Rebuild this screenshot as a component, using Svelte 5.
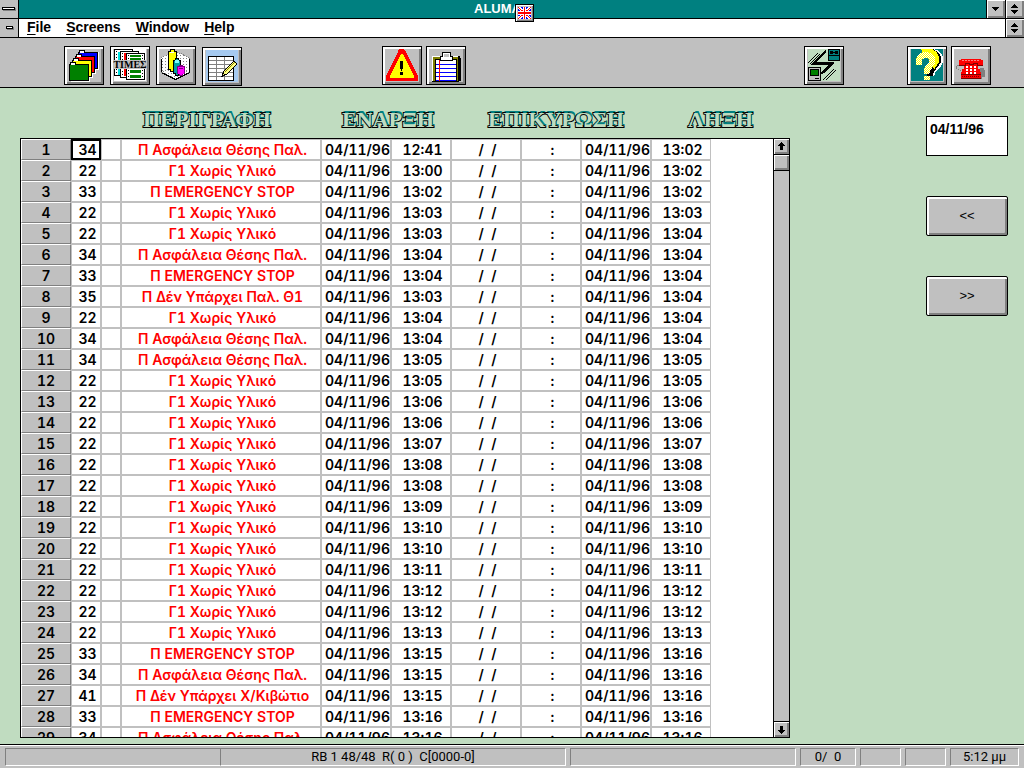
<script lang="ts">
	type Row = [code: number, start: string, end: string];

	const DATE = '04/11/96';

	const descriptions: Record<number, string> = {
		22: 'Γ1 Χωρίς Υλικό',
		33: 'Π EMERGENCY STOP',
		34: 'Π Ασφάλεια Θέσης Παλ.',
		35: 'Π Δέν Υπάρχει Παλ. Θ1',
		41: 'Π Δέν Υπάρχει Χ/Κιβώτιο'
	};

	const rows: Row[] = [
		[34, '12:41', '13:02'],
		[22, '13:00', '13:02'],
		[33, '13:02', '13:02'],
		[22, '13:03', '13:03'],
		[22, '13:03', '13:04'],
		[34, '13:04', '13:04'],
		[33, '13:04', '13:04'],
		[35, '13:03', '13:04'],
		[22, '13:04', '13:04'],
		[34, '13:04', '13:04'],
		[34, '13:05', '13:05'],
		[22, '13:05', '13:05'],
		[22, '13:06', '13:06'],
		[22, '13:06', '13:06'],
		[22, '13:07', '13:07'],
		[22, '13:08', '13:08'],
		[22, '13:08', '13:08'],
		[22, '13:09', '13:09'],
		[22, '13:10', '13:10'],
		[22, '13:10', '13:10'],
		[22, '13:11', '13:11'],
		[22, '13:12', '13:12'],
		[22, '13:12', '13:12'],
		[22, '13:13', '13:13'],
		[33, '13:15', '13:16'],
		[34, '13:15', '13:16'],
		[41, '13:15', '13:16'],
		[33, '13:16', '13:16'],
		[34, '13:16', '13:16']
	];

	const menus = ['File', 'Screens', 'Window', 'Help'];
	const headings = ['ΠΕΡΙΓΡΑΦΗ', 'ΕΝΑΡΞΗ', 'ΕΠΙΚΥΡΩΣΗ', 'ΛΗΞΗ'];

	const folders = [
		{ x: 14, y: 6, color: '#0000ff' },
		{ x: 11, y: 10, color: '#ff0000' },
		{ x: 8, y: 14, color: '#ffff00' },
		{ x: 5, y: 18, color: '#008000' }
	];

	let date = $state(DATE);
	let selected = $state(0);
</script>

<div class="window">
	<header class="titlebar">
		<button class="system" aria-label="Control menu">
			<svg width="18" height="18" shape-rendering="crispEdges">
				<path d="M3 10h13v1h-13zM15 8h1v3h-1z" fill="#808080" />
				<rect x="2" y="7" width="13" height="3" />
				<rect x="3" y="8" width="11" height="1" fill="#fff" />
			</svg>
		</button>
		<h1>ALUMA</h1>
		<button class="frame" aria-label="Minimize">
			<svg width="18" height="18" shape-rendering="crispEdges">
				<path d="M5 7h7v1h-1v1h-1v1h-1v1h-1v-1h-1v-1h-1v-1h-1z" />
			</svg>
		</button>
		<button class="frame" aria-label="Restore">
			<svg width="18" height="18" shape-rendering="crispEdges">
				<path d="M8 4h1v1h1v1h1v1h1v1H5v-1h1v-1h1v-1h1zM5 10h7v1h-1v1h-1v1h-1v1h-1v-1h-1v-1h-1v-1h-1z" />
			</svg>
		</button>
		<button class="language" aria-label="English">
			<svg width="13" height="12" shape-rendering="crispEdges">
				<rect width="13" height="12" fill="#0000ff" />
				<path d="M0 0l13 12M13 0l-13 12" stroke="#fff" stroke-width="3" />
				<path d="M0 0l13 12M13 0l-13 12" stroke="#ff0000" />
				<path d="M5 0h3v12h-3zM0 4h13v4h-13z" fill="#fff" />
				<path d="M6 0h1v12h-1zM0 5h13v2h-13z" fill="#ff0000" />
			</svg>
		</button>
	</header>

	<nav class="menubar">
		<button class="system" aria-label="Document menu">
			<svg width="18" height="18" shape-rendering="crispEdges">
				<path d="M7 10h7v1h-7zM13 8h1v3h-1z" fill="#808080" />
				<rect x="6" y="7" width="7" height="3" />
				<rect x="7" y="8" width="5" height="1" fill="#fff" />
			</svg>
		</button>
		<div class="menus">
			{#each menus as menu}
				<button class="menu"><u>{menu[0]}</u>{menu.slice(1)}</button>
			{/each}
		</div>
		<button class="frame" aria-label="Restore document">
			<svg width="18" height="18" shape-rendering="crispEdges">
				<path d="M8 4h1v1h1v1h1v1h1v1H5v-1h1v-1h1v-1h1zM5 10h7v1h-1v1h-1v1h-1v1h-1v-1h-1v-1h-1v-1h-1z" />
			</svg>
		</button>
	</nav>

	<div class="toolbar">
		<div class="group wide">
			<button class="tool" aria-label="Folders">
				<svg viewBox="3 3 34 33" shape-rendering="crispEdges">
					{#each folders as { x, y }}
						<rect x={x + 2} {y} width="19" height="18" fill="#fff" />
					{/each}
					{#each folders as { x, y, color }}
						<g transform="translate({x} {y})">
							<path d="M0 17v-17h1v-2h6v2h13v17z" />
							<path d="M1 16v-15h1v-2h4v2h13v15z" fill={color} />
							<path d="M2 -1h4v2h-4z" fill="#fff" />
						</g>
					{/each}
				</svg>
			</button>
			<button class="tool" aria-label="Times">
				<svg viewBox="3 3 34 33" shape-rendering="crispEdges">
					<rect x="4" y="3" width="32" height="32" fill="#fff" />
					<g fill="#fff" stroke="#000">
						<rect x="4.500" y="3.500" width="18" height="26" />
						<rect x="10.500" y="5.500" width="18" height="26" />
						<rect x="16.500" y="7.500" width="18" height="26" />
					</g>
					<g stroke="#000" stroke-dasharray="1 2">
						<path d="M6.500 5v24M12.500 7v24M18.500 9v24M32.500 9v24" />
					</g>
					<path d="M8 6h2v8h-2zM8 23h2v6h-2z" fill="#00e0e0" />
					<path d="M14 7h2v7h-2zM14 23h2v7h-2z" fill="#ff0000" />
					<path d="M20 9h11v2h-11zM20 12h11v2h-11zM20 24h11v3h-11zM20 29h11v3h-11z" fill="#008000" />
					<rect x="4" y="14" width="32" height="9" fill="#c0c0c0" />
					<text x="20" y="22" text-anchor="middle">TIMEΣ</text>
				</svg>
			</button>
			<button class="tool" aria-label="Charts">
				<svg viewBox="3 3 34 33" shape-rendering="crispEdges">
					<defs>
						<pattern id="dots" width="3" height="3" patternUnits="userSpaceOnUse">
							<rect width="3" height="3" fill="#fff" />
							<rect width="1" height="1" fill="#808080" />
						</pattern>
						<pattern id="glow" width="2" height="2" patternUnits="userSpaceOnUse">
							<rect width="2" height="2" fill="#ffff00" />
							<rect width="1" height="1" fill="#fff" />
							<rect x="1" y="1" width="1" height="1" fill="#fff" />
						</pattern>
					</defs>
					<path d="M5 12l14-7 15 7v15l-15 7-14-7z" fill="url(#dots)" />
					<path d="M5.500 12.500v14l14 7 14-7v-14" fill="none" stroke="#000" />
					<path d="M5 12l14-7 15 7M19 20l15 7M19 20l-14 7" fill="none" stroke="#808080" stroke-dasharray="1 1" />
					<path d="M12 5h2v-2h5v2h2v19h-2v2h-5v-2h-2z" />
					<path d="M13 6h2v-2h3v2h2v17h-2v2h-3v-2h-2z" fill="#ffff00" />
					<path d="M14 6h4v1h-4z" fill="#fff" />
					<path d="M17 14h2v-2h4v2h2v14h-2v2h-4v-2h-2z" />
					<path d="M18 15h2v-2h2v2h2v12h-2v2h-2v-2h-2z" fill="#00a0a0" />
					<path d="M19 14h4v3h-4z" fill="#80ffff" />
					<path d="M21 20h2v-1h4v1h2v8h-2v2h-4v-2h-2z" fill="#800080" />
					<path d="M22 21h6v7h-2v1h-2v-1h-2z" fill="#ff00ff" />
					<path d="M23 22h4v1h-4z" fill="#800080" />
				</svg>
			</button>
			<button class="tool low" aria-label="Edit table">
				<svg viewBox="3 3 34 33" shape-rendering="crispEdges">
					<rect x="4" y="3" width="32" height="32" fill="#a6caf0" />
					<rect x="6.500" y="9.500" width="25" height="24" fill="#fff" stroke="#000" />
					<path d="M14.500 10v23M22.500 10v23M7 13.500h24M7 17.500h24M7 21.500h24M7 25.500h24M7 29.500h24" stroke="#808080" />
					<path d="M20 29l2-5 10-10 3 3-10 10z" fill="#ffff80" stroke="#000" />
					<path d="M23 25l10-10" stroke="#808000" />
					<path d="M20 30v-2h2z" />
				</svg>
			</button>
		</div>
		<div class="group">
			<button class="tool" aria-label="Alarms">
				<svg viewBox="3 3 34 33" shape-rendering="crispEdges">
					<path d="M17 3h5l2 3 12 24v5h-32v-5l12-24z" fill="#ff0000" />
					<path d="M19 8h2l11 22v2h-24v-2z" fill="#ffff00" />
					<path d="M18 15h3v8h-1v2h-1v-2h-1zM18 26h3v3h-3z" />
				</svg>
			</button>
			<button class="tool" aria-label="Alarm list">
				<svg viewBox="3 3 34 33" shape-rendering="crispEdges">
					<path d="M9 10h25v2h1v23h-4v-24h-22z" />
					<path d="M6.500 35v-24.500h26v24.500z" fill="#808000" stroke="#000" />
					<path d="M6 35v-25h26" fill="none" stroke="#fff" />
					<rect x="9" y="13" width="22" height="22" />
					<rect x="10" y="14" width="20" height="21" fill="#fff" />
					<path d="M10 18.500h20M10 22.500h20M10 26.500h20M10 30.500h20M10 34.500h20" stroke="#0000ff" />
					<path d="M13.500 14v21" stroke="#ff0000" />
					<path d="M16.500 6.500h8v4h2v4h-12v-4h2z" fill="#fff" stroke="#000" />
					<rect x="18" y="8" width="5" height="3" fill="#c0c0c0" />
				</svg>
			</button>
		</div>
		<div class="group">
			<button class="tool" aria-label="Communications">
				<svg viewBox="3 3 34 33" shape-rendering="crispEdges">
					<rect x="4" y="3" width="32" height="32" fill="#c0dcc0" />
					<path d="M24 3h12v12h-12z" />
					<path d="M25 4h10v5h-10zM25 10h10v4h-10z" fill="#008080" />
					<path d="M26 5h3v3h-3zM31 5h3v3h-3zM29 6h2v1h-2z" />
					<path d="M22 3v3l-10 10h18v2l-10 9-3 1v-2l7-7h-17v-1l14-14z" />
					<path d="M4 17l10-10M6 18l10-10M19 34l11-11M22 34l10-10" stroke="#000" stroke-width="1" />
					<rect x="4.500" y="21.500" width="12" height="13" fill="#c0c0c0" stroke="#000" />
					<rect x="6.500" y="23.500" width="8" height="6" fill="#008000" stroke="#000" />
					<path d="M11 32h4v1h-4z" />
				</svg>
			</button>
		</div>
		<div class="group">
			<button class="tool" aria-label="Help">
				<svg viewBox="3 3 34 33" shape-rendering="crispEdges">
					<rect x="4" y="3" width="32" height="32" fill="#008080" />
					<g fill="none" stroke-width="6">
						<path d="M18 7q3-2 8-1 8 2 7 9-1 4-5 7t-3 8" stroke="#fff" />
						<path d="M16 7q4-2 9-1 7 3 6 9-2 4-5 7t-3 8" stroke="#000" />
						<path d="M15 6q4-1 9 0 6 3 5 9-2 4-4 6" stroke="#ffff00" />
						<path d="M12 19v-5q1-5 8-5 6 1 5 6 0 3-3 6-3 2-2 7" stroke="url(#glow)" />
					</g>
					<path d="M17 30h6v4h-6z" fill="url(#glow)" />
				</svg>
			</button>
			<button class="tool" aria-label="Telephone">
				<svg viewBox="3 3 34 33" shape-rendering="crispEdges">
					<path d="M29 22h4v2h1v7h-3v2h-6v-4z" fill="#808080" />
					<path d="M5 20h1v3h-1zM6 19h2v1h-2zM7 23h1v1h-1zM9 24h1v1h-1z" fill="#808080" />
					<path d="M15 17h11v3h1v3h2v3h1v6h-20v-6h1v-3h2v-3h2z" fill="#ff0000" />
					<path d="M10 13h20v1h2v5h-6v-2h-12v2h-6v-5h2z" fill="#ff0000" />
					<path d="M8 19h6v-2h4v1h4v-1h4v2h6M10 28.500h20M10 32.500h20" fill="none" stroke="#800000" />
					<path d="M11 30.500h18" stroke="#800000" stroke-dasharray="1 1" />
					<path d="M11 14.500h18" stroke="#ff8080" stroke-dasharray="2 1" />
					<path d="M15 20h2v2h-2zM19 20h2v2h-2zM23 20h2v2h-2zM15 23h2v2h-2zM19 23h2v2h-2zM23 23h2v2h-2zM15 26h2v2h-2zM19 26h2v2h-2zM23 26h2v2h-2z" fill="#fff" />
				</svg>
			</button>
		</div>
	</div>

	<main>
		<section class="log">
			<div class="headings">
				{#each headings as heading}
					<h2>{heading}</h2>
				{/each}
			</div>
			<div class="sheet">
				<div class="rows">
					<table>
						<colgroup>
							<col class="number" />
							<col class="code" />
							<col class="flag" />
							<col class="description" />
							<col class="date" />
							<col class="time" />
							<col class="date" />
							<col class="time" />
							<col class="date" />
							<col class="time" />
						</colgroup>
						<tbody>
							{#each rows as [code, start, end], i}
								<tr onclick={() => (selected = i)}>
									<th scope="row">{i + 1}</th>
									<td class:selected={selected === i}>{code}</td>
									<td></td>
									<td class="alarm">{descriptions[code]}</td>
									<td>{DATE}</td>
									<td>{start}</td>
									<td>/&nbsp; /</td>
									<td>:</td>
									<td>{DATE}</td>
									<td>{end}</td>
								</tr>
							{/each}
						</tbody>
					</table>
				</div>
				<div class="scrollbar">
					<button aria-label="Scroll up">
						<svg width="15" height="15" shape-rendering="crispEdges">
							<path d="M7 3h1v1h1v1h1v1h1v1h-2v4h-3v-4h-2v-1h1v-1h1v-1h1z" />
						</svg>
					</button>
					<div class="thumb"></div>
					<button class="down" aria-label="Scroll down">
						<svg width="15" height="15" shape-rendering="crispEdges">
							<path d="M6 4h3v4h2v1h-1v1h-1v1h-1v1h-1v-1h-1v-1h-1v-1h-1v-1h2z" />
						</svg>
					</button>
				</div>
			</div>
		</section>

		<aside>
			<input aria-label="Date" bind:value={date} />
			<button class="page">&lt;&lt;</button>
			<button class="page">&gt;&gt;</button>
		</aside>
	</main>

	<footer>
		<div class="open"></div>
		<div>RB 1 48/48&nbsp; R( 0 )&nbsp; C[0000-0]</div>
		<div class="apart"></div>
		<div class="apart">0/&nbsp; 0</div>
		<div class="apart"></div>
		<div class="apart"></div>
		<div class="apart">5:12 μμ</div>
	</footer>
</div>

<style>
	:global(body) {
		background: #c0dcc0;
	}

	.window {
		--face: #c0c0c0;
		--shade: #808080;
		--field: #c0dcc0;
		display: flex;
		flex-direction: column;
		height: 100vh;
		overflow: hidden;
		background: var(--field);
		color: #000;
		font: bold 14px/18px 'Liberation Sans', Arial, sans-serif;
	}

	button {
		margin: 0;
		border: 0;
		border-radius: 0;
		padding: 0;
		background: var(--face);
		color: inherit;
		font: inherit;
	}

	svg {
		display: block;
	}

	.titlebar,
	.menubar {
		display: flex;
		position: relative;
		flex: none;
		border-bottom: 1px solid #000;
		height: 18px;
	}

	.titlebar {
		background: #008080;
	}

	.menubar {
		background: #fff;
	}

	h1 {
		flex: 1;
		margin: 0;
		padding-right: 10px;
		color: #fff;
		font-size: 13px;
		text-align: center;
	}

	.system {
		border-right: 1px solid #000;
	}

	.frame {
		border-left: 1px solid #000;
		box-shadow:
			inset 1px 1px #fff,
			inset -2px -2px var(--shade);
	}

	/* floats over the title */
	.language {
		position: absolute;
		z-index: 1;
		top: 4px;
		left: calc(50% + 3px);
		border: 1px solid #000;
		padding: 2px;
		box-shadow:
			inset 1px 1px #fff,
			inset -1px -1px var(--shade);
	}

	.menus {
		display: flex;
		flex: 1;
		gap: 15px;
		align-items: flex-start;
		padding-left: 8px;
	}

	.menu {
		background: none;
		line-height: 16px;
	}

	u {
		text-underline-offset: 2px;
	}

	.toolbar {
		display: grid;
		flex: none;
		grid-template-columns: 318fr 422fr 103fr 117fr;
		border-bottom: 1px solid #000;
		padding: 8px 0 1px 64px;
		background: var(--face);
	}

	.group {
		display: flex;
		align-items: flex-start;
		gap: 4px;
	}

	.wide {
		gap: 6px;
	}

	.tool {
		border: 1px solid #000;
		padding: 2px;
		box-shadow:
			inset 2px 2px #fff,
			inset -2px -2px var(--shade);
	}

	.tool svg {
		width: 34px;
		height: 33px;
	}

	.tool text {
		font: bold 10px 'Liberation Serif', serif;
	}

	.low {
		margin-top: 1px;
	}

	main {
		display: flex;
		flex: 1;
		gap: 136px;
		min-height: 0;
		padding: 0 16px 6px 20px;
	}

	.log {
		display: flex;
		flex: 1;
		flex-direction: column;
		min-width: 0;
	}

	.headings {
		display: grid;
		flex: none;
		grid-template-columns: 199px 146px 200px auto;
		align-items: end;
		height: 50px;
		padding: 0 0 4px 123px;
		box-sizing: border-box;
	}

	h2 {
		margin: 0;
		color: var(--field);
		font: bold 22px/28px 'Liberation Serif', 'Times New Roman', serif;
		-webkit-text-stroke: 2px #000;
		paint-order: stroke fill;
		text-shadow: 1px -2px #008080;
	}

	.sheet {
		display: flex;
		flex: 1;
		min-height: 0;
		border: 1px solid #000;
		background: #fff;
	}

	.rows {
		flex: 1;
		min-width: 0;
		overflow: hidden;
	}

	table {
		width: 690px;
		border-spacing: 0;
		table-layout: fixed;
		font: 600 14px/19px Inter, 'Liberation Sans', sans-serif;
		font-variant-numeric: tabular-nums;
		text-align: center;
	}

	.number {
		width: 50px;
	}

	.code {
		width: 30px;
	}

	.flag {
		width: 20px;
	}

	.description {
		width: 200px;
	}

	.date {
		width: 70px;
	}

	.time {
		width: 60px;
	}

	th,
	td {
		height: 19px;
		border: 1px solid var(--face);
		padding: 0;
		white-space: nowrap;
	}

	td {
		padding-left: 3px;
	}

	th {
		border-color: #fff var(--shade) var(--shade) #fff;
		background: var(--face);
		font-weight: 600;
	}

	.alarm {
		color: #ff0000;
	}

	.selected {
		outline: 2px solid #000;
		outline-offset: -2px;
	}

	.scrollbar {
		display: flex;
		flex: none;
		flex-direction: column;
		border-left: 1px solid #000;
		width: 15px;
		background: var(--face);
	}

	.scrollbar button,
	.thumb {
		border-bottom: 1px solid #000;
		box-shadow:
			inset 1px 1px #fff,
			inset -2px -2px var(--shade);
	}

	.thumb {
		height: 15px;
	}

	.scrollbar .down {
		margin-top: auto;
		border-top: 1px solid #000;
		border-bottom: 0;
	}

	aside {
		display: flex;
		flex: none;
		flex-direction: column;
		gap: 40px;
		width: 82px;
		padding-top: 28px;
	}

	input {
		height: 40px;
		border: 1px solid #000;
		border-radius: 0;
		padding: 0 0 14px 3px;
		box-sizing: border-box;
		width: 100%;
		background: #fff;
		color: inherit;
		font: inherit;
	}

	.page {
		height: 40px;
		border: 1px solid #000;
		border-radius: 2px;
		box-shadow:
			inset 2px 2px #fff,
			inset -2px -2px var(--shade);
		font-size: 13px;
		font-weight: normal;
	}

	footer {
		display: grid;
		flex: none;
		grid-template-columns: 215fr 346fr 230fr 60px 45px 45px 73px;
		border-top: 1px solid #000;
		padding: 3px 5px 2px;
		background: var(--face);
		box-shadow: inset 0 1px #fff;
		font: 13px/16px Roboto, 'Liberation Sans', sans-serif;
		text-align: center;
		white-space: nowrap;
	}

	footer div {
		height: 16px;
		border: 1px solid;
		border-color: var(--shade) #fff #fff var(--shade);
	}

	footer .open {
		border-right: 0;
	}

	.apart {
		margin-left: 4px;
	}
</style>
